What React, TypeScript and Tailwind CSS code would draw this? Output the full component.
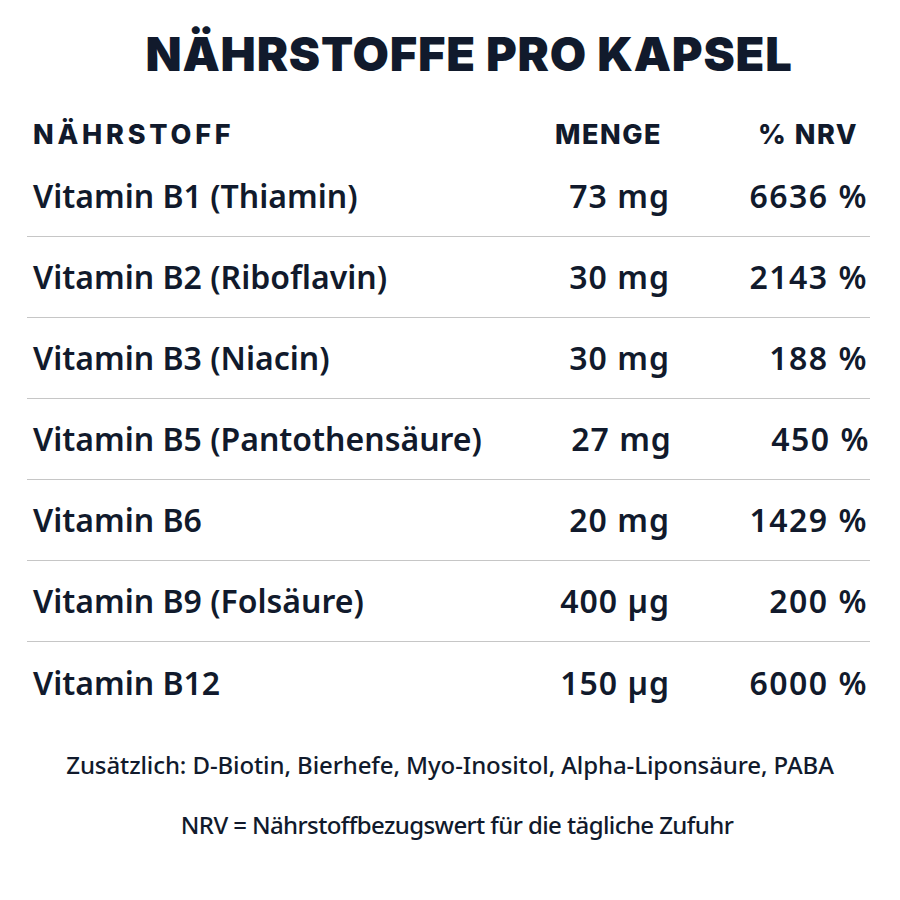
import React from "react";

const rows = [
  ["Vitamin B1 (Thiamin)", "73 mg", "6636 %"],
  ["Vitamin B2 (Riboflavin)", "30 mg", "2143 %"],
  ["Vitamin B3 (Niacin)", "30 mg", "188 %"],
  ["Vitamin B5 (Pantothensäure)", "27 mg", "450 %"],
  ["Vitamin B6", "20 mg", "1429 %"],
  ["Vitamin B9 (Folsäure)", "400 µg", "200 %"],
  ["Vitamin B12", "150 µg", "6000 %"],
];

export default function App() {
  return (
    <div
      className="w-[900px] h-[900px] bg-white text-[#111a2c] flex flex-col"
      style={{ fontFamily: '"Noto Sans", "Open Sans", sans-serif' }}
    >
      <div className="h-[106px] flex items-center justify-center pl-[38px]">
        <h1
          className="text-[47px] font-black tracking-[0.8px] leading-none"
          style={{ fontFamily: 'Inter, "Noto Sans", sans-serif' }}
        >
          NÄHRSTOFFE PRO KAPSEL
        </h1>
      </div>
      <div className="mx-[27px] w-[843px]">
        <div
          className="grid grid-cols-[1fr_190px_198px] h-[50px] pt-[8px] items-center text-[27px] font-extrabold tracking-[1.5px] pl-[6px] pr-[4px]"
          style={{ fontFamily: 'Inter, "Noto Sans", sans-serif' }}
        >
          <div className="tracking-[3.8px]">NÄHRSTOFF</div>
          <div className="text-right pr-[6px]">MENGE</div>
          <div className="text-right pr-[8px]">% NRV</div>
        </div>
        {rows.map((r, i) => (
          <div
            key={i}
            className={`grid grid-cols-[1fr_190px_198px] items-center h-[81px] text-[32px] font-semibold pl-[6px] pr-[2px] ${
              i < rows.length - 1 ? "border-b border-[#c6c6c6]" : ""
            }`}
          >
            <div className="whitespace-nowrap">{r[0]}</div>
            <div className="text-right whitespace-nowrap tracking-[1px]">{r[1]}</div>
            <div className="text-right whitespace-nowrap tracking-[1.5px]">{r[2]}</div>
          </div>
        ))}
      </div>
      <div className="mt-[26px] flex flex-col items-center text-[24px] font-medium">
        <div className="h-[32px] flex items-center tracking-[-0.1px]">
          Zusätzlich: D-Biotin, Bierhefe, Myo-Inositol, Alpha-Liponsäure, PABA
        </div>
        <div className="mt-[28px] h-[32px] flex items-center tracking-[-0.6px] pl-[14px]">
          NRV = Nährstoffbezugswert für die tägliche Zufuhr
        </div>
      </div>
    </div>
  );
}
